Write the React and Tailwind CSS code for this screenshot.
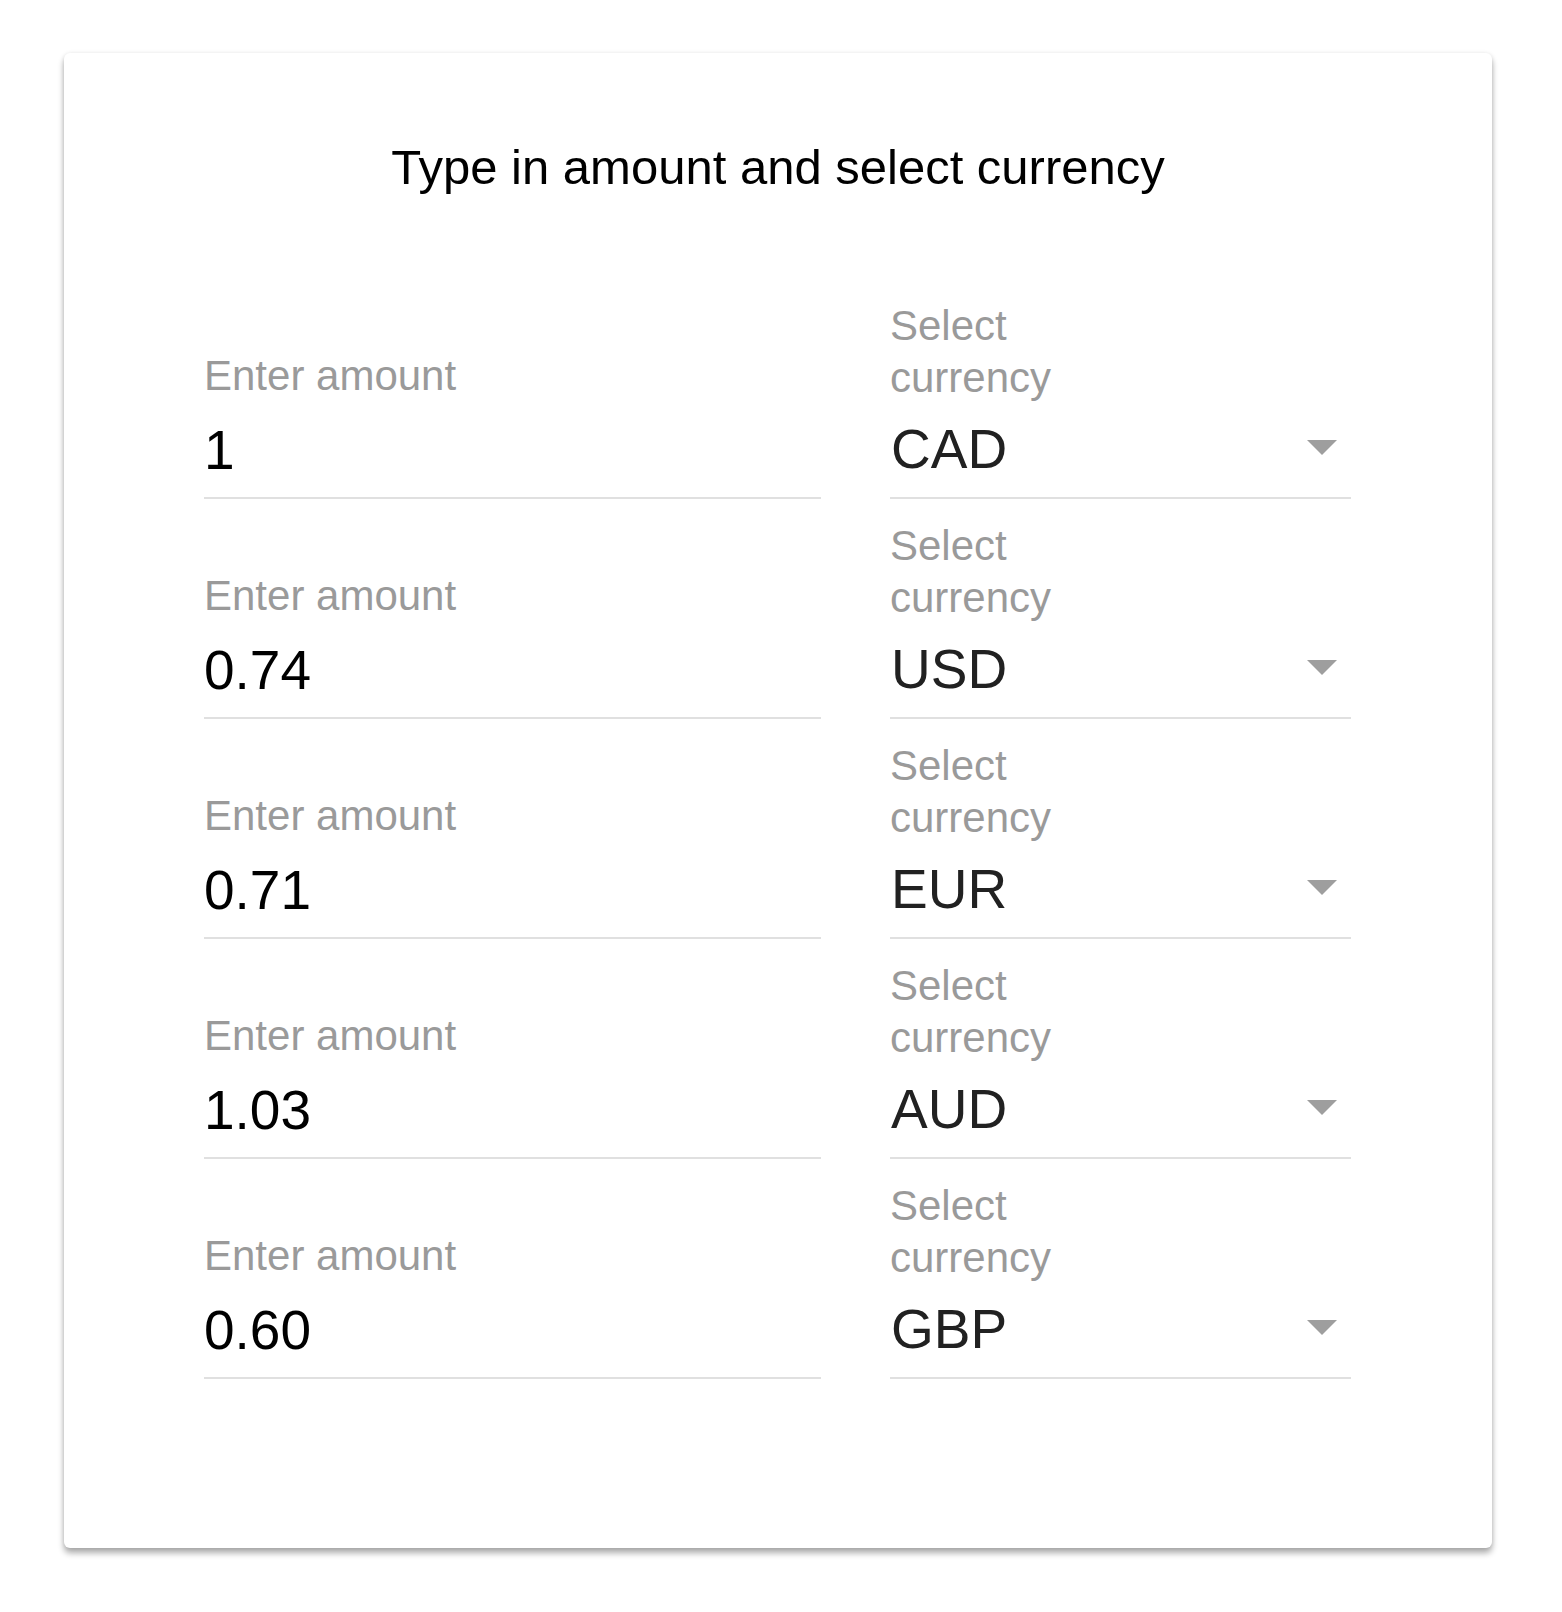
import React from 'react';

const rows = [
    { amount: '1', currency: 'CAD' },
    { amount: '0.74', currency: 'USD' },
    { amount: '0.71', currency: 'EUR' },
    { amount: '1.03', currency: 'AUD' },
    { amount: '0.60', currency: 'GBP' },
];

const AmountField = ({ value }) => (
    <div className="flex w-[617px] flex-col border-b-2 border-[#e0e0e0] pb-[15px]">
        <div className="h-[50px] text-[42px] leading-[50px] text-[#9a9a9a]">Enter amount</div>
        <div className="mt-[17px] h-[64px] text-[55px] leading-[64px] text-black">{value}</div>
    </div>
);

const CurrencyField = ({ value }) => (
    <div className="flex w-[461px] flex-col border-b-2 border-[#e0e0e0] pb-[16px]">
        <div className="text-[42px] leading-[52px] text-[#9a9a9a]">
            Select
            <br />
            currency
        </div>
        <div className="mt-[13px] flex h-[64px] items-center justify-between">
            <span className="ml-[1px] text-[55px] leading-[64px] text-[#212121]">{value}</span>
            <svg width="30" height="15" viewBox="0 0 30 15" className="mr-[14px] mt-[-4px]">
                <path d="M0 0 L30 0 L15 15 Z" fill="#9e9e9e" />
            </svg>
        </div>
    </div>
);

export default function App() {
    return (
        <div className="min-h-[1612px] bg-white pl-[64px] pt-[53px] font-['Liberation_Sans',Arial,sans-serif]">
            <div className="h-[1495px] w-[1428px] rounded-[6px] bg-white pt-[86px] shadow-[0_5px_6px_rgba(0,0,0,0.33),0_0_4px_rgba(0,0,0,0.08)]">
                <h1 className="h-[56px] text-center text-[49px] leading-[56px] text-black">
                    Type in amount and select currency
                </h1>
                <div className="mt-[84px] pl-[140px]">
                    {rows.map((row) => (
                        <div key={row.currency} className="flex h-[220px] items-end gap-[69px]">
                            <AmountField value={row.amount} />
                            <CurrencyField value={row.currency} />
                        </div>
                    ))}
                </div>
            </div>
        </div>
    );
}
